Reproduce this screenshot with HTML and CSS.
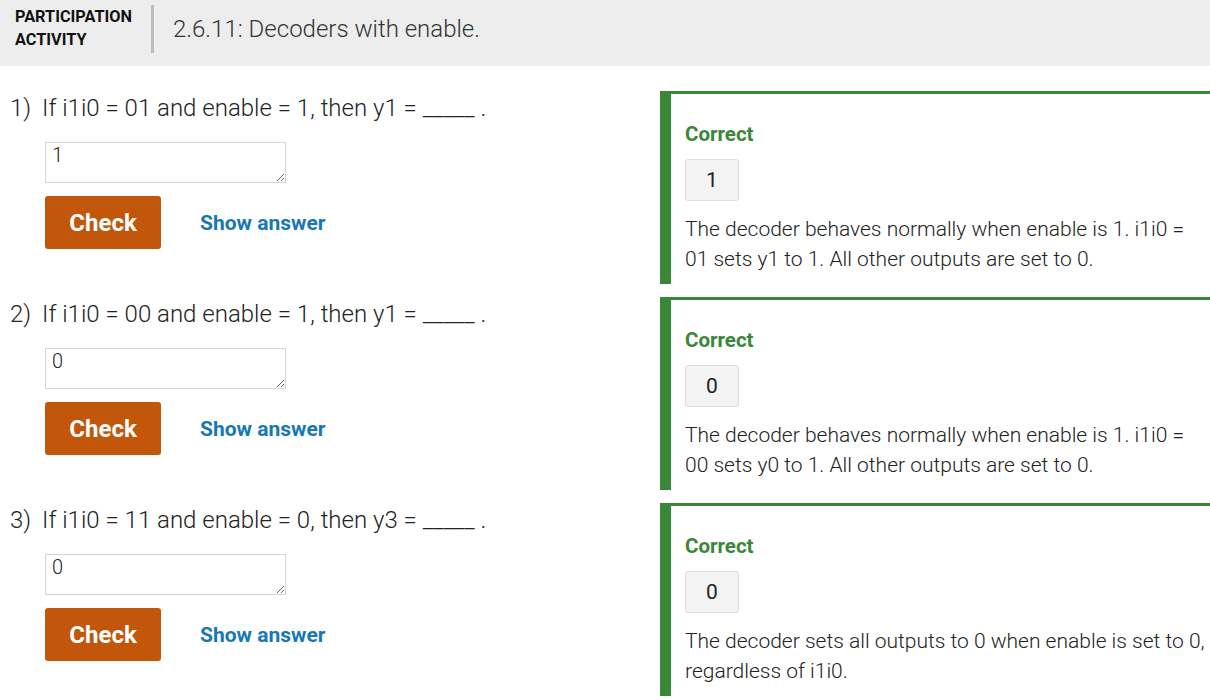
FILE: index.html
```html
<!DOCTYPE html>
<html lang="en">
<head>
<meta charset="utf-8">
<title>Participation activity</title>
<link rel="stylesheet" href="styles.css">
</head>
<body>
<div class="activity">
  <header class="header">
    <div class="label">PARTICIPATION<br>ACTIVITY</div>
    <div class="divider"></div>
    <div class="title">2.6.11: Decoders with enable.</div>
  </header>
  <div class="questions">
    <div class="row">
      <div class="question">
        <div class="prompt"><span class="num">1)</span><span class="qtext">If i1i0 = 01 and enable = 1, then y1 = _____ .</span></div>
        <textarea class="answer" readonly>1</textarea>
        <div class="actions">
          <button class="check">Check</button>
          <a class="show">Show answer</a>
        </div>
      </div>
      <div class="feedback">
        <div class="correct">Correct</div>
        <div class="given">1</div>
        <p class="explain">The decoder behaves normally when enable is 1. i1i0 = 01 sets y1 to 1. All other outputs are set to 0.</p>
      </div>
    </div>
    <div class="row">
      <div class="question">
        <div class="prompt"><span class="num">2)</span><span class="qtext">If i1i0 = 00 and enable = 1, then y1 = _____ .</span></div>
        <textarea class="answer" readonly>0</textarea>
        <div class="actions">
          <button class="check">Check</button>
          <a class="show">Show answer</a>
        </div>
      </div>
      <div class="feedback">
        <div class="correct">Correct</div>
        <div class="given">0</div>
        <p class="explain">The decoder behaves normally when enable is 1. i1i0 = 00 sets y0 to 1. All other outputs are set to 0.</p>
      </div>
    </div>
    <div class="row">
      <div class="question">
        <div class="prompt"><span class="num">3)</span><span class="qtext">If i1i0 = 11 and enable = 0, then y3 = _____ .</span></div>
        <textarea class="answer" readonly>0</textarea>
        <div class="actions">
          <button class="check">Check</button>
          <a class="show">Show answer</a>
        </div>
      </div>
      <div class="feedback">
        <div class="correct">Correct</div>
        <div class="given">0</div>
        <p class="explain">The decoder sets all outputs to 0 when enable is set to 0, regardless of i1i0.</p>
      </div>
    </div>
  </div>
</div>
</body>
</html>
```
FILE: styles.css
```css
html, body {
  margin: 0;
  padding: 0;
  background: #ffffff;
  overflow: hidden;
}
body {
  font-family: Roboto, "Liberation Sans", sans-serif;
  color: #222222;
}
.activity {
  width: 1240px;
}
.header {
  height: 66px;
  background: #ededed;
  display: flex;
  align-items: flex-start;
}
.label {
  font-weight: 700;
  font-size: 16.3px;
  line-height: 23px;
  color: #111111;
  padding: 5px 0 0 15px;
  width: 136px;
}
.divider {
  width: 3px;
  height: 48px;
  margin-top: 5px;
  background: #bdbdbd;
}
.title {
  font-size: 24px;
  font-weight: 300;
  color: #333333;
  margin-left: 19px;
  margin-top: 15px;
  line-height: 28px;
}
.questions {
  padding-top: 25px;
}
.row {
  display: flex;
  height: 193px;
  margin-bottom: 13px;
}
.question {
  width: 660px;
  flex: none;
}
.prompt {
  display: flex;
  align-items: baseline;
  padding-left: 10px;
  margin-top: 3px;
  font-weight: 300;
  line-height: 28px;
}
.num {
  font-size: 24px;
  width: 32px;
}
.qtext {
  font-size: 24px;
}
.answer {
  display: block;
  margin: 20px 0 0 45px;
  width: 241px;
  height: 41px;
  box-sizing: border-box;
  border: 1px solid #cfd6dc;
  font-family: Roboto, "Liberation Sans", sans-serif;
  font-weight: 300;
  font-size: 20px;
  color: #222222;
  padding: 1px 6px 0 6px;
  line-height: 22px;
  outline: none;
}
.actions {
  display: flex;
  align-items: center;
  margin: 13px 0 0 45px;
}
.check {
  width: 116px;
  height: 53px;
  background: #c2570c;
  color: #ffffff;
  border: none;
  border-radius: 3px;
  font-family: Roboto, "Liberation Sans", sans-serif;
  font-weight: 700;
  font-size: 24px;
  padding: 0;
}
.show {
  margin-left: 39px;
  color: #1778b5;
  font-weight: 700;
  font-size: 21px;
}
.feedback {
  flex: none;
  width: 560px;
  box-sizing: border-box;
  border-left: 11px solid #3a873a;
  border-top: 3px solid #3a873a;
  padding: 28px 0 0 14px;
}
.correct {
  color: #3a873a;
  font-weight: 700;
  font-size: 20.5px;
  line-height: 24px;
}
.given {
  margin-top: 13px;
  width: 54px;
  height: 42px;
  box-sizing: border-box;
  background: #f3f3f3;
  border: 1px solid #dddddd;
  border-radius: 3px;
  font-size: 21px;
  font-weight: 400;
  color: #222222;
  display: flex;
  align-items: center;
  justify-content: center;
}
.explain {
  margin: 13px 0 0 0;
  font-size: 21px;
  font-weight: 300;
  line-height: 30px;
  width: 522px;
}
```
